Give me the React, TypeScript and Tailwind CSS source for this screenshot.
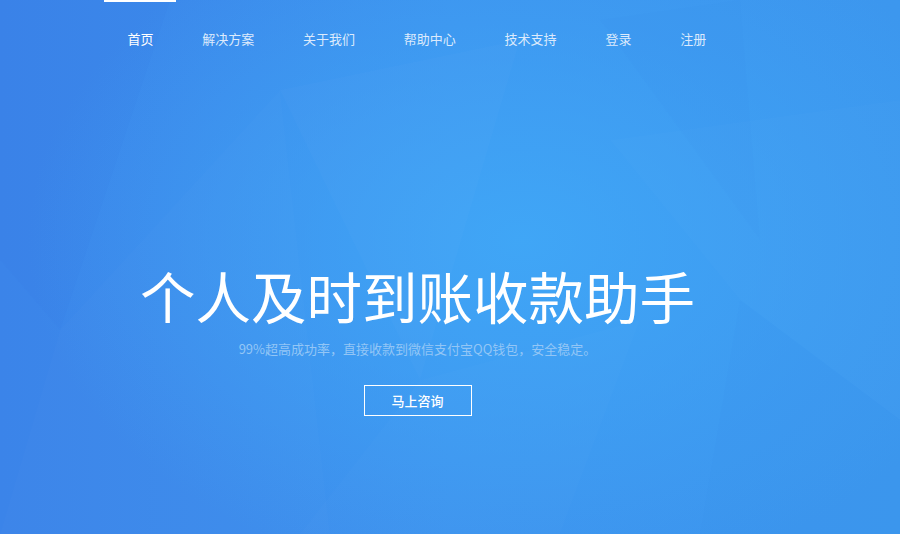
const NAV = ["首页", "解决方案", "关于我们", "帮助中心", "技术支持", "登录", "注册"];

const FONT = "font-['Microsoft_YaHei','Noto_Sans_CJK_SC','Noto_Sans',sans-serif]";

// faint low-poly facets behind the hero
function Facets() {
  return (
    <svg className="pointer-events-none absolute inset-0 h-full w-full" viewBox="0 0 900 534" preserveAspectRatio="none" aria-hidden="true">
      <polygon points="0,0 170,0 60,330 0,260" fill="#2f6fe0" opacity="0.03" />
      <polygon points="60,330 280,90 330,534 0,534" fill="#ffffff" opacity="0.012" />
      <polygon points="280,90 520,40 420,380" fill="#ffffff" opacity="0.015" />
      <polygon points="600,20 740,0 760,240" fill="#1f7fe0" opacity="0.02" />
      <polygon points="610,140 900,100 900,420 740,300" fill="#ffffff" opacity="0.01" />
      <polygon points="740,300 900,420 900,534 700,534" fill="#1f7fe0" opacity="0.02" />
      <polygon points="420,380 640,320 560,534 300,534" fill="#ffffff" opacity="0.01" />
    </svg>
  );
}

export default function App() {
  return (
    <div
      className={`relative h-[534px] w-[900px] overflow-hidden bg-[radial-gradient(ellipse_55%_65%_at_58%_45%,rgba(64,168,247,0.9)_0%,rgba(64,168,247,0)_100%),linear-gradient(90deg,#3b84e9_0%,#3d92ee_50%,#3c97ee_100%)] ${FONT}`}
    >
      <Facets />

      <nav className="relative flex pl-[103px]">
        {NAV.map((item, i) => (
          <a
            key={item}
            href="#"
            className={[
              "relative block px-[24.4px] pt-[30px] text-[13px] leading-[18px]",
              i === 0 ? "text-white" : "text-[#dceafc]",
            ].join(" ")}
          >
            {i === 0 ? <span className="absolute left-[1px] top-0 h-[2px] w-[72px] bg-white" /> : null}
            {item}
          </a>
        ))}
      </nav>

      <section className="relative flex w-[835px] flex-col items-center pt-[214px]">
        <h1 className="text-[55.5px] font-normal leading-[66px] text-white">个人及时到账收款助手</h1>
        <p className="mt-[12px] text-[13px] leading-[18px] text-[#93c6f6]">
          99%超高成功率，直接收款到微信支付宝QQ钱包，安全稳定。
        </p>
        <button
          type="button"
          className="mt-[27px] h-[31px] w-[108px] border border-white text-[13px] font-medium text-white"
        >
          马上咨询
        </button>
      </section>
    </div>
  );
}
